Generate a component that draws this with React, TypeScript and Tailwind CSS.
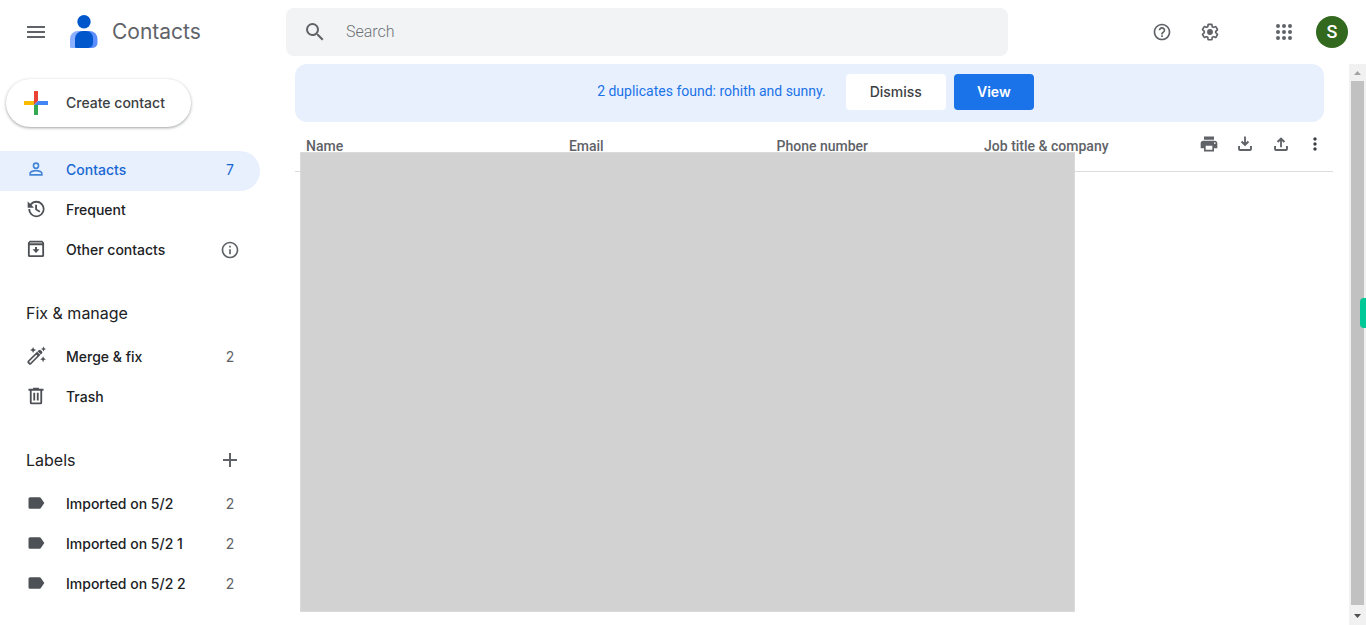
import type { ReactNode } from "react";
import { MdAdd, MdHelpOutline, MdInfoOutline, MdLabel, MdMenu, MdMoreVert, MdPrint, MdSearch } from "react-icons/md";
import { clsx } from "clsx";

const sans = "font-[Inter,sans-serif]";
const roboto = "font-[Roboto,sans-serif]";

function Logo() {
  return (
    <svg viewBox="0 0 40 40" className="h-10 w-10" aria-hidden="true">
      <circle cx="20" cy="9.7" r="6.7" fill="#0057cc" />
      <path d="M14 19h8v17H7.500q-1.500 0-1.500-1.500V27a8 8 0 0 1 8-8z" fill="#8ab0ff" />
      <path d="M18 19h7.500a8 8 0 0 1 8 8v4a5 5 0 0 1-5 5H18z" fill="#5c8dff" />
      <path d="M19 19h3a7 7 0 0 1 7 7v5a5 5 0 0 1-5 5H12.500q-1.500 0-1.500-1.500V27a8 8 0 0 1 8-8z" fill="#0057cc" />
    </svg>
  );
}

function PlusLogo() {
  return (
    <svg viewBox="0 0 24 24" className="h-6 w-6 shrink-0" aria-hidden="true">
      <path fill="#ea4335" d="M10 0h4v10l-4 4z" />
      <path fill="#fbbc04" d="M0 10h10v4H0z" />
      <path fill="#34a853" d="M10 14h4v10h-4z" />
      <path fill="#4285f4" d="M14 10h10v4H10z" />
    </svg>
  );
}

function Glyph({ d, className = "h-5 w-5" }: { d: string; className?: string }) {
  return (
    <svg viewBox="0 0 24 24" fill="currentColor" fillRule="evenodd" className={className} aria-hidden="true">
      <path d={d} />
    </svg>
  );
}

const icons = {
  person:
    "M12 5.900a2.100 2.100 0 1 1 0 4.200 2.100 2.100 0 0 1 0-4.200zM12 14.900c2.970 0 6.100 1.460 6.100 2.100v1.100H5.900V17c0-.64 3.130-2.100 6.100-2.100zM12 4a4 4 0 1 0 0 8 4 4 0 0 0 0-8zm0 9c-2.670 0-8 1.340-8 4v3h16v-3c0-2.660-5.330-4-8-4z",
  history:
    "M12.500 2.200c-3 0-5.700 1.400-7.500 3.500L2 3v7.500h7.500L6.600 7.300A7.600 7.600 0 1 1 4.900 12H2.700a9.800 9.800 0 1 0 9.800-9.800zM11 7v6l5 3.200 1.200-1.800-4-2.400V7z",
  archive:
    "M4.500 2h15L21.700 4.500v15.200a2 2 0 0 1-2 2H4.300a2 2 0 0 1-2-2V4.500zM4.500 7.600v11.900h15V7.600zM5 4.200l-.7 1h15.400l-.7-1zM10.800 9.500h2.400v2.700h3L12 16.800l-4.200-4.600h3z",
  wand:
    "M13.800 6.200 2.200 17.800a2 2 0 0 0 0 2.800l1.200 1.200a2 2 0 0 0 2.800 0L17.800 10.200zM12.300 10.400l1.400 1.400L5 20.300 3.700 19zM17.700 5a1.800 1.800 0 0 0-2.500 0l-1.800 1.800 3.900 3.900 1.800-1.800a1.800 1.800 0 0 0 0-2.500zM21 .5l1 2.200 2 .9-2 .9-1 2.200-1-2.200-2-.9 2-.9zM8.500 1.200l1.100 2.500 2.500 1.100-2.500 1.100-1.100 2.500-1.100-2.500-2.500-1.100 2.500-1.100zM20.500 12.200l1.100 2.500 2.400 1.100-2.400 1.100-1.100 2.500-1.100-2.500-2.500-1.100 2.500-1.100z",
  trash:
    "M15.500 3.300V2h-7v1.300H3v2.300h1.600V20a2 2 0 0 0 2 2h10.800a2 2 0 0 0 2-2V5.600H21V3.300zM17.200 19.800H6.800V5.600h10.400zM8.800 8h2.200v9.500H8.800zM13 8h2.200v9.500H13z",
  settings:
    "M13.850 22.250h-3.700c-.74 0-1.360-.54-1.450-1.270l-.27-1.890c-.27-.14-.53-.29-.79-.46l-1.800.72c-.7.26-1.470-.03-1.810-.65L2.200 15.530c-.35-.66-.2-1.440.36-1.880l1.530-1.190c-.01-.15-.02-.3-.02-.46 0-.15.01-.31.02-.46l-1.520-1.190c-.59-.45-.74-1.260-.37-1.880l1.850-3.190c.34-.62 1.110-.9 1.790-.63l1.810.73c.26-.17.52-.32.78-.46l.27-1.910c.09-.7.710-1.250 1.440-1.250h3.700c.74 0 1.360.54 1.450 1.270l.27 1.890c.27.14.53.29.79.46l1.800-.72c.71-.26 1.480.03 1.820.65l1.840 3.180c.36.66.2 1.440-.36 1.880l-1.520 1.190c.01.15.02.3.02.46s-.01.31-.02.46l1.520 1.190c.56.45.72 1.230.37 1.860l-1.860 3.220c-.34.62-1.110.9-1.800.63l-1.800-.72c-.26.17-.52.32-.78.46l-.27 1.910c-.1.680-.720 1.220-1.460 1.220zm-3.230-2h2.760l.37-2.550.53-.22c.44-.18.88-.44 1.340-.78l.45-.34 2.380.96 1.380-2.400-2.030-1.580.07-.56c.03-.26.06-.51.06-.78s-.03-.53-.06-.78l-.07-.56 2.030-1.580-1.390-2.400-2.390.96-.45-.35c-.42-.32-.87-.58-1.330-.77l-.52-.22-.37-2.550h-2.760l-.37 2.550-.53.21c-.44.19-.88.44-1.340.79l-.45.33-2.380-.95-1.390 2.390 2.030 1.580-.07.56a7 7 0 0 0-.06.79c0 .26.02.53.06.78l.07.56-2.030 1.580 1.380 2.400 2.390-.96.45.35c.43.33.86.58 1.330.77l.53.22zM12 8.500a3.500 3.500 0 1 0 0 7 3.500 3.500 0 0 0 0-7z",
  apps:
    "M6 8a2 2 0 1 0 0-4 2 2 0 0 0 0 4zm6 0a2 2 0 1 0 0-4 2 2 0 0 0 0 4zm6 0a2 2 0 1 0 0-4 2 2 0 0 0 0 4zM6 14a2 2 0 1 0 0-4 2 2 0 0 0 0 4zm6 0a2 2 0 1 0 0-4 2 2 0 0 0 0 4zm6 0a2 2 0 1 0 0-4 2 2 0 0 0 0 4zM6 20a2 2 0 1 0 0-4 2 2 0 0 0 0 4zm6 0a2 2 0 1 0 0-4 2 2 0 0 0 0 4zm6 0a2 2 0 1 0 0-4 2 2 0 0 0 0 4z",
  download: "M17 9.800 15.300 8.100l-2.200 2.200V3h-2.200v7.300L8.700 8.100 7 9.800l5 5zM3.700 14.500V18a2.300 2.300 0 0 0 2.300 2.300h12a2.300 2.300 0 0 0 2.300-2.300v-3.500H18V18H6v-3.500z",
  upload: "M7 8.800l1.700 1.700 2.200-2.200V16h2.200V8.300l2.200 2.200L17 8.800l-5-5zM3.700 14.500V18a2.300 2.300 0 0 0 2.300 2.300h12a2.300 2.300 0 0 0 2.300-2.300v-3.500H18V18H6v-3.500z",
};

type ItemProps = {
  icon: ReactNode;
  label: string;
  end?: ReactNode;
  active?: boolean;
};

function NavItem({ icon, label, end, active }: ItemProps) {
  return (
    <li>
      <a
        href="#"
        aria-current={active ? "page" : undefined}
        className={clsx(
          "flex h-10 items-center rounded-r-full pb-0.5 pl-[26px] text-sm font-medium",
          active ? "bg-[#e8f0fe] text-[#1967d2]" : "text-[#202124]"
        )}
      >
        <span className={clsx("flex w-10 shrink-0 pb-0.5", active ? "text-[#4285d8]" : "text-[#4d5054]")}>{icon}</span>
        <span className="flex-1 truncate">{label}</span>
        <span className={clsx("flex w-[60px] justify-center font-normal", !active && "text-[#5f6368]")}>{end}</span>
      </a>
    </li>
  );
}

function Sidebar() {
  return (
    <aside className={clsx("w-[260px] shrink-0", sans)}>
      <button
        type="button"
        className="mt-[15px] mb-6 ml-1.5 flex h-12 items-center gap-[18px] rounded-full bg-white pr-[26px] pl-[18px] text-sm font-medium text-[#3c4043] shadow-[0_1px_2px_0_rgba(60,64,67,0.3),0_1px_3px_1px_rgba(60,64,67,0.15)]"
      >
        <PlusLogo />
        Create contact
      </button>
      <nav aria-label="Main menu">
        <ul>
          <NavItem active icon={<Glyph d={icons.person} />} label="Contacts" end="7" />
          <NavItem icon={<Glyph d={icons.history} />} label="Frequent" />
          <NavItem
            icon={<Glyph d={icons.archive} />}
            label="Other contacts"
            end={<MdInfoOutline className="h-5 w-5 text-[#5f6368]" />}
          />
        </ul>
        <h2 className="mt-[19px] flex h-12 items-center pb-0.5 pl-[26px] text-base text-[#202124]">Fix &amp; manage</h2>
        <ul>
          <NavItem icon={<Glyph d={icons.wand} />} label="Merge & fix" end="2" />
          <NavItem icon={<Glyph d={icons.trash} />} label="Trash" />
        </ul>
        <div className="mt-[19px] flex h-12 items-center justify-between pb-0.5 pl-[26px] text-[#202124]">
          <h2 className="text-base">Labels</h2>
          <button type="button" aria-label="Create label" className="flex w-[60px] justify-center text-[#5f6368]">
            <MdAdd className="h-6 w-6" />
          </button>
        </div>
        <ul>
          {["Imported on 5/2", "Imported on 5/2 1", "Imported on 5/2 2"].map((label) => (
            <NavItem key={label} icon={<MdLabel className="h-5 w-5" />} label={label} end="2" />
          ))}
        </ul>
      </nav>
    </aside>
  );
}

function Header() {
  return (
    <header className="flex h-16 shrink-0 items-center pr-[18px] text-[#5f6368]">
      <div className="flex w-[286px] shrink-0 items-center pl-6">
        <button type="button" aria-label="Main menu">
          <MdMenu className="h-6 w-6" />
        </button>
        <a href="#" className={clsx("ml-4 flex items-center gap-2 text-[21px]", sans)}>
          <Logo />
          Contacts
        </a>
      </div>
      <form role="search" className="flex h-12 max-w-[722px] flex-1 items-center rounded-lg bg-[#f1f3f4] pl-[17px]">
        <button type="button" aria-label="Search contacts">
          <MdSearch className="h-6 w-6" />
        </button>
        <input
          type="text"
          aria-label="Search"
          placeholder="Search"
          className={clsx(
            "ml-[19px] min-w-0 flex-1 bg-transparent text-base font-light outline-none placeholder:text-[#6f7377]",
            roboto
          )}
        />
      </form>
      <div className="ml-auto flex items-center">
        <button type="button" aria-label="Support" className="mr-7">
          <MdHelpOutline className="h-5 w-5" />
        </button>
        <button type="button" aria-label="Settings" className="mr-[52px]">
          <Glyph d={icons.settings} />
        </button>
        <button type="button" aria-label="Google apps" className="mr-5">
          <Glyph d={icons.apps} className="h-6 w-6" />
        </button>
        <button
          type="button"
          aria-label="Account"
          className={clsx("h-8 w-8 rounded-full bg-[#33691e] text-lg leading-8 font-medium text-white", roboto)}
        >
          S
        </button>
      </div>
    </header>
  );
}

function DuplicatesBanner() {
  return (
    <div className="mr-[9px] flex h-[58px] items-start justify-center rounded-xl bg-[#e8f0fe] pt-2.5 pl-3">
      <p className={clsx("mr-5 text-sm leading-[34px] text-[#1a73e8]", roboto)}>
        2 duplicates found: rohith and sunny.
      </p>
      <button type="button" className={clsx("mr-2 h-9 rounded bg-white px-6 text-sm font-medium text-[#3c4043]", sans)}>
        Dismiss
      </button>
      <button
        type="button"
        className={clsx("h-9 w-20 rounded bg-[#1a73e8] text-sm font-semibold text-white", sans)}
      >
        View
      </button>
    </div>
  );
}

function ContactsTable() {
  return (
    <table className={clsx("w-full table-fixed text-left text-sm text-[#5f6368]", roboto)}>
      <thead>
        <tr className="h-[49px] border-b border-[#dadce0]">
          <th scope="col" className="w-[26%] pl-[11px] font-medium">Name</th>
          <th scope="col" className="w-[20%] pl-1 font-medium">Email</th>
          <th scope="col" className="w-[20%] pl-1 font-medium">Phone number</th>
          <th scope="col" className="pl-1 font-medium">
            <div className="flex items-center justify-between pr-2">
              Job title &amp; company
              <span className="flex items-center gap-4 pb-1">
                <button type="button" aria-label="Print">
                  <MdPrint className="h-5 w-5" />
                </button>
                <button type="button" aria-label="Export">
                  <Glyph d={icons.download} />
                </button>
                <button type="button" aria-label="Import">
                  <Glyph d={icons.upload} />
                </button>
                <button type="button" aria-label="List settings" className="-ml-0.5 text-[#3c4043]">
                  <MdMoreVert className="h-5 w-5" />
                </button>
              </span>
            </div>
          </th>
        </tr>
      </thead>
    </table>
  );
}

function Scrollbar() {
  return (
    <div className="flex w-[17px] shrink-0 flex-col items-center bg-[#f1f1f1]" aria-hidden="true">
      <svg viewBox="0 0 17 17" className="h-[17px] w-[17px]">
        <path d="M8.500 7 12 11H5z" fill="#a3a3a3" />
      </svg>
      <div className="w-[13px] flex-1 bg-[#c1c1c1]" />
      <svg viewBox="0 0 17 20" className="h-5 w-[17px]">
        <path d="M8.500 13 12 9H5z" fill="#505050" />
      </svg>
    </div>
  );
}

export default function App() {
  return (
    <div className="relative flex h-screen flex-col overflow-hidden bg-white">
      <Header />
      <div className="flex min-h-0 flex-1">
        <Sidebar />
        <main className="relative min-w-0 flex-1 pr-4 pl-[35px]">
          <DuplicatesBanner />
          <ContactsTable />
          {/* cover over the contact rows */}
          <div className="absolute top-[88px] right-[274px] bottom-[13px] left-10 border border-[#dadada] bg-[#d2d2d2]" />
        </main>
        <Scrollbar />
      </div>
      <div className="absolute top-1/2 right-0 h-[30px] w-1.5 -translate-y-1/2 rounded-l bg-[#00c896]" />
    </div>
  );
}
